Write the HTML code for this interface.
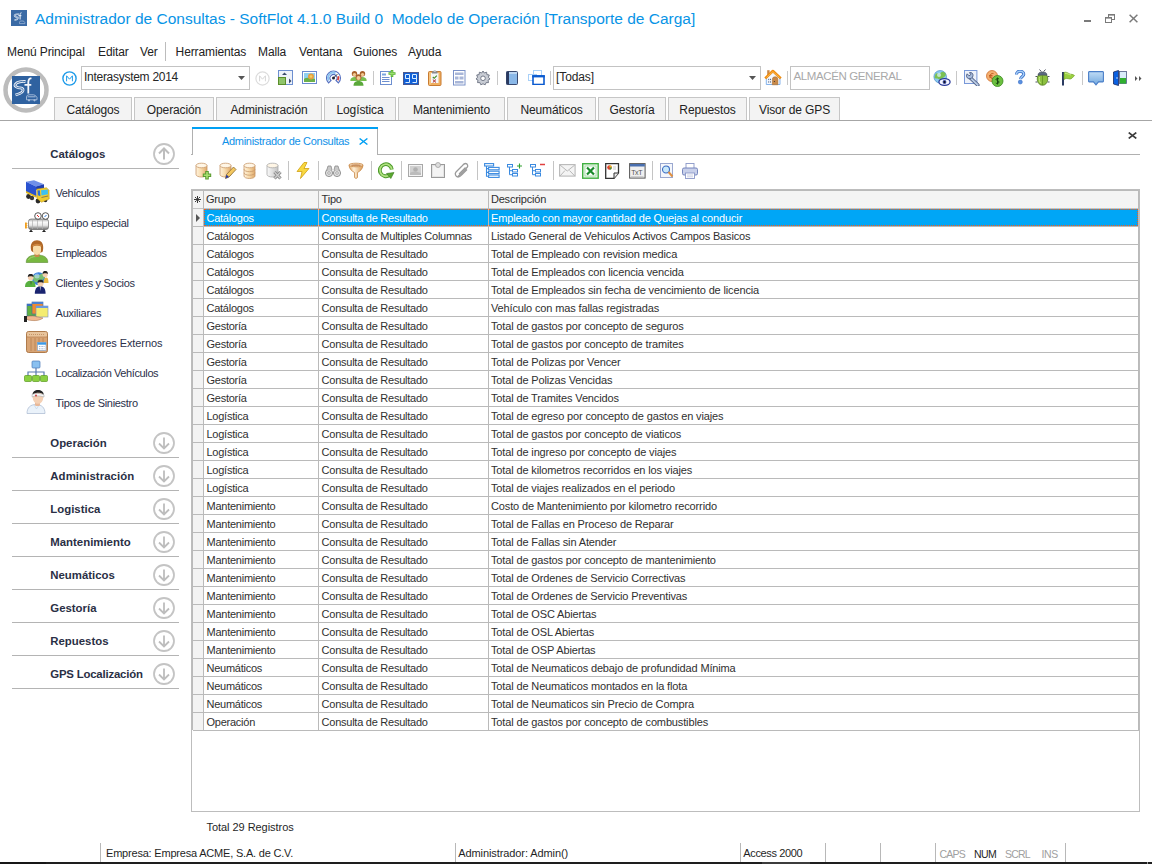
<!DOCTYPE html><html><head><meta charset="utf-8"><style>
html,body{margin:0;padding:0;}
body{width:1152px;height:864px;position:relative;overflow:hidden;background:#fff;font-family:"Liberation Sans",sans-serif;}
.t{position:absolute;white-space:pre;}
.b{position:absolute;display:block;}
</style></head><body>
<svg class="b" style="left:11px;top:10px" width="16" height="16" viewBox="0 0 16 16"><rect width="16" height="16" fill="#3a6aa5"/><path d="M8 4.3C6.5 4 4.3 4.5 3.7 5.3S4 6.7 5 6.9 7.3 7.2 7 8.3 5.5 9.8 3.5 10.3" fill="none" stroke="#e6edf6" stroke-width="1.5"/><path d="M8 4.3C6.5 4 4.3 4.5 3.7 5.3S4 6.7 5 6.9 7.3 7.2 7 8.3 5.5 9.8 3.5 10.3" fill="none" stroke="#3a6aa5" stroke-width="0.5"/><path d="M10.5 2.8C9.6 2.6 9.2 3.3 9.1 4.3V9.5M7.3 5.7H10.4" fill="none" stroke="#f0f4fa" stroke-width="1"/><path d="M8.5 12.3Q8.7 11 9.8 11H12Q13 11 13.8 12.4V13.6H8.5Z" fill="none" stroke="#a9bfdc" stroke-width="0.7"/></svg>
<div class="t" style="left:35px;top:11.48px;font-size:15.5px;line-height:15.5px;color:#0894e6;font-weight:400;letter-spacing:0px;">Administrador de Consultas - SoftFlot 4.1.0 Build 0  Modelo de Operación [Transporte de Carga]</div>
<div class="b" style="left:1084px;top:20px;width:7px;height:2px;background:#7a7a7a"></div>
<svg class="b" style="left:1105px;top:14px" width="10" height="9" viewBox="0 0 10 9"><rect x="3.5" y="0.5" width="6" height="5" fill="#fff" stroke="#7a7a7a"/><rect x="3" y="0" width="7" height="1.6" fill="#7a7a7a"/><rect x="0.5" y="3.5" width="6" height="5" fill="#fff" stroke="#7a7a7a"/><rect x="0" y="3" width="7" height="1.6" fill="#7a7a7a"/></svg>
<svg class="b" style="left:1129px;top:14px" width="9" height="9" viewBox="0 0 9 9"><path d="M0.6 0.8L8.4 8.2M8.4 0.8L0.6 8.2" stroke="#7a7a7a" stroke-width="1.5"/></svg>
<div class="t" style="left:7px;top:45.84px;font-size:12px;line-height:12px;color:#222;font-weight:400;letter-spacing:-0.12px;">Menú Principal</div>
<div class="t" style="left:98px;top:45.84px;font-size:12px;line-height:12px;color:#222;font-weight:400;letter-spacing:-0.12px;">Editar</div>
<div class="t" style="left:140px;top:45.84px;font-size:12px;line-height:12px;color:#222;font-weight:400;letter-spacing:-0.12px;">Ver</div>
<div class="t" style="left:175.6px;top:45.84px;font-size:12px;line-height:12px;color:#222;font-weight:400;letter-spacing:-0.12px;">Herramientas</div>
<div class="t" style="left:258px;top:45.84px;font-size:12px;line-height:12px;color:#222;font-weight:400;letter-spacing:-0.12px;">Malla</div>
<div class="t" style="left:299px;top:45.84px;font-size:12px;line-height:12px;color:#222;font-weight:400;letter-spacing:-0.12px;">Ventana</div>
<div class="t" style="left:353.3px;top:45.84px;font-size:12px;line-height:12px;color:#222;font-weight:400;letter-spacing:-0.12px;">Guiones</div>
<div class="t" style="left:408px;top:45.84px;font-size:12px;line-height:12px;color:#222;font-weight:400;letter-spacing:-0.12px;">Ayuda</div>
<div class="b" style="left:165px;top:42px;width:1px;height:19px;background:#bcbcbc"></div>
<svg class="b" style="left:2px;top:66px" width="48" height="48" viewBox="0 0 48 48"><circle cx="24" cy="24" r="20.5" fill="#fff" stroke="#bcbcbc" stroke-width="4.5"/><rect x="10" y="10" width="28" height="28" fill="#2f62a0"/><path d="M23.5 15.5C20 15 15 16 13.5 18S14.5 21.5 17 21.8 21.5 22 21 24.5 18 27.5 13.5 29" fill="none" stroke="#eef2f8" stroke-width="2.8" stroke-linejoin="round"/><path d="M23.5 15.5C20 15 15 16 13.5 18S14.5 21.5 17 21.8 21.5 22 21 24.5 18 27.5 13.5 29" fill="none" stroke="#2f62a0" stroke-width="0.9"/><path d="M29.5 12.5C27.5 12 26.5 13.5 26.3 16V27.5M22.5 18.8H29.3" fill="none" stroke="#f4f6fa" stroke-width="1.8"/><path d="M24.5 30.5Q25 28.8 27 28.8H31.5Q33.5 28.8 35 31.5V33.8H24.5Z" fill="none" stroke="#a9bfdc" stroke-width="0.9"/><path d="M25.5 30.8H33.5" stroke="#a9bfdc" stroke-width="1"/><circle cx="27" cy="34.3" r="1.1" fill="#a9bfdc"/><circle cx="32.5" cy="34.3" r="1.1" fill="#a9bfdc"/></svg>
<svg class="b" style="left:62px;top:71px" width="15" height="15" viewBox="0 0 15 15"><circle cx="7.5" cy="7.5" r="6.6" fill="#fff" stroke="#1e9be9" stroke-width="1.4"/><path d="M4.6 10.3V4.8L7.5 8.2 10.4 4.8V10.3" fill="none" stroke="#1e9be9" stroke-width="1"/></svg>
<div class="b" style="left:81px;top:66px;width:167px;height:22px;border:1px solid #c3c3c3;background:#fff"></div>
<div class="t" style="left:84px;top:70.64px;font-size:12px;line-height:12px;color:#262626;font-weight:400;letter-spacing:-0.28px;">Interasystem 2014</div>
<svg class="b" style="left:238px;top:76px" width="7" height="4" viewBox="0 0 7 4"><path d="M0 0H7L3.5 4Z" fill="#555"/></svg>
<svg class="b" style="left:255px;top:71px" width="15" height="15" viewBox="0 0 15 15"><circle cx="7.5" cy="7.5" r="6.6" fill="#fff" stroke="#dcdcdc" stroke-width="1.2"/><path d="M4.6 10.3V4.8L7.5 8.2 10.4 4.8V10.3" fill="none" stroke="#d6d6d6" stroke-width="1"/></svg>
<svg class="b" style="left:278px;top:70px" width="16" height="16" viewBox="0 0 16 16"><rect x="0.5" y="0.5" width="14" height="14" fill="#eef2f9" stroke="#6d8fd0"/><path d="M4 5L6.5 2.5 9 5Z" fill="#3a4a6a"/><path d="M11 8.5L13.5 11 11 13.5Z" fill="#3a4a6a"/><rect x="0.5" y="7.5" width="7" height="7" fill="#8fc46a" stroke="#5a8d2a"/></svg>
<svg class="b" style="left:302px;top:71px" width="16" height="14" viewBox="0 0 16 14"><rect x="0.5" y="0.5" width="14" height="12" fill="#fff" stroke="#6b8ad0"/><rect x="2" y="2" width="11" height="9" fill="#8fd0f0"/><path d="M2 8C5 6 9 7 13 8V11H2Z" fill="#6cb04a"/><circle cx="9" cy="5.5" r="3" fill="#e8a040"/><circle cx="9" cy="5.5" r="1.3" fill="#f4d060"/></svg>
<svg class="b" style="left:326px;top:70px" width="16" height="16" viewBox="0 0 16 16"><path d="M2.55 12.95A7 7 0 1 1 12.45 12.95L10 10.5A3.5 3.5 0 1 0 5 10.5Z" fill="#fff" stroke="#5570c0" stroke-width="1.1"/><path d="M3 10.5A5 5 0 0 1 9.5 3.3" fill="none" stroke="#8cc4f0" stroke-width="2"/><path d="M12.3 6.3A5 5 0 0 1 11.8 10.2" fill="none" stroke="#e03a30" stroke-width="1.8"/><path d="M7.5 8L11.3 4.2" stroke="#333" stroke-width="1"/><circle cx="7.5" cy="8" r="1.5" fill="#223"/></svg>
<svg class="b" style="left:350px;top:70px" width="17" height="16" viewBox="0 0 17 16"><path d="M0.3 11C0.3 8 2.3 7 4.5 7S8.7 8 8.7 11Z" fill="#78c050"/><path d="M8.3 11C8.3 8 10.3 7 12.5 7S16.7 8 16.7 11Z" fill="#78c050"/><circle cx="4.5" cy="3.8" r="2.7" fill="#a8602a"/><circle cx="4.5" cy="4.6" r="1.7" fill="#f0c890"/><circle cx="12.5" cy="3.8" r="2.7" fill="#a8602a"/><circle cx="12.5" cy="4.6" r="1.7" fill="#f0c890"/><path d="M3.5 15.8C3.5 12 6 11 8.5 11S13.5 12 13.5 15.8Z" fill="#5aa83a"/><circle cx="8.5" cy="7.2" r="3" fill="#a8602a"/><circle cx="8.5" cy="8.1" r="2" fill="#f4cc98"/></svg>
<div class="b" style="left:373px;top:71px;width:1px;height:14px;background:#c8c8c8"></div>
<svg class="b" style="left:380px;top:70px" width="17" height="16" viewBox="0 0 17 16"><rect x="0.5" y="1.5" width="11" height="13" fill="#fff" stroke="#6d8fd0"/><rect x="2" y="3.5" width="4" height="2" fill="#7aa6e0"/><path d="M2 7.5H9.5M2 9.5H9.5M2 11.5H9.5" stroke="#6d8fd0" stroke-width="1"/><path d="M12 0V7M8.5 3.5H15.5" stroke="#58b030" stroke-width="2.6"/><path d="M12 0.8V6.2M9.3 3.5H14.7" stroke="#9ae070" stroke-width="1"/></svg>
<svg class="b" style="left:403px;top:72px" width="16" height="13" viewBox="0 0 16 13"><rect x="0.5" y="0.5" width="15" height="12" fill="#1060d8" stroke="#4a5890" stroke-width="1"/><path d="M2.5 2.5H6.5V10.5H2.5M2.5 2.5V6.5H6.5M9.5 2.5H13.5V10.5H9.5M9.5 2.5V6.5H13.5" fill="none" stroke="#d8ecff" stroke-width="1"/></svg>
<svg class="b" style="left:428px;top:70px" width="14" height="16" viewBox="0 0 14 16"><rect x="0.5" y="1.5" width="12.5" height="14" rx="1" fill="#f0b060" stroke="#c87a30"/><rect x="1.5" y="2.5" width="1" height="12" fill="#fad8a0"/><rect x="3" y="3" width="7.5" height="10" fill="#f4f6fa"/><path d="M4 1.2H9.5V3.5H4Z" fill="#8a8a90"/><rect x="5.5" y="0" width="2.5" height="2" rx="1" fill="#c8c8cc"/><path d="M4.8 7L6.2 8.3 8.8 5.6" fill="none" stroke="#3a8a20" stroke-width="1.1"/><path d="M4.8 9.5L8 12.5M8 9.5L4.8 12.5" stroke="#b02828" stroke-width="1"/></svg>
<svg class="b" style="left:453px;top:70px" width="13" height="16" viewBox="0 0 13 16"><rect x="0.5" y="0.5" width="11.5" height="14.5" fill="#fff" stroke="#7b92c8"/><rect x="2" y="2.5" width="8.5" height="2.5" fill="#a8b6d8"/><rect x="2" y="6.5" width="3.5" height="3" fill="#a8b6d8"/><rect x="6.5" y="6.5" width="4" height="3" fill="#a8b6d8"/><rect x="2" y="11" width="8.5" height="2.5" fill="#a8b6d8"/></svg>
<svg class="b" style="left:475px;top:70px" width="16" height="16" viewBox="0 0 16 16"><path d="M8 1L9.3 3 11.6 2.2 11.9 4.6 14.3 5 13.4 7.2 15 9 13 10.2 13.5 12.6 11.1 12.6 10.2 14.8 8 13.8 5.8 14.8 4.9 12.6 2.5 12.6 3 10.2 1 9 2.6 7.2 1.7 5 4.1 4.6 4.4 2.2 6.7 3Z" fill="#c8ccd4" stroke="#6a7080" stroke-width="0.9"/><circle cx="8" cy="8.3" r="2.3" fill="#fff" stroke="#6a7080" stroke-width="0.9"/></svg>
<div class="b" style="left:497px;top:71px;width:1px;height:14px;background:#c8c8c8"></div>
<svg class="b" style="left:506px;top:71px" width="12" height="14" viewBox="0 0 12 14"><rect x="0.5" y="0.5" width="11" height="13" rx="1" fill="#8ab8e8" stroke="#3a4a70"/><rect x="0.5" y="0.5" width="2.5" height="13" fill="#2a3a60"/><rect x="3" y="1.5" width="8" height="1" fill="#f0f4fa"/></svg>
<svg class="b" style="left:528px;top:70px" width="17" height="15" viewBox="0 0 17 15"><rect x="5.5" y="0.5" width="8" height="6" fill="#fff" stroke="#a8d0f8"/><rect x="0.5" y="4.5" width="8" height="6" fill="#fff" stroke="#a8d0f8"/><rect x="5" y="6" width="11" height="8.5" fill="#fff" stroke="#0a5ad0" stroke-width="1.6"/><rect x="4.2" y="5.2" width="12.6" height="2.2" fill="#0a5ad0"/></svg>
<div class="b" style="left:550px;top:71px;width:1px;height:14px;background:#c8c8c8"></div>
<div class="b" style="left:553px;top:66px;width:206px;height:22px;border:1px solid #c3c3c3;background:#fff"></div>
<div class="t" style="left:556px;top:70.64px;font-size:12px;line-height:12px;color:#262626;font-weight:400;letter-spacing:-0.1px;">[Todas]</div>
<svg class="b" style="left:749px;top:76px" width="7" height="4" viewBox="0 0 7 4"><path d="M0 0H7L3.5 4Z" fill="#555"/></svg>
<svg class="b" style="left:764px;top:69px" width="18" height="17" viewBox="0 0 18 17"><rect x="3.2" y="1.2" width="2.4" height="5" fill="#c8884a"/><path d="M2.3 9V15.5H16V9L9 3Z" fill="#f4f8ff" stroke="#78acea" stroke-width="0.9"/><path d="M1.2 9.4L8.9 2 16.8 9.4" fill="none" stroke="#f08c10" stroke-width="2.6" stroke-linejoin="round"/><path d="M2.5 8.5L8.9 2.6 15.5 8.5" fill="none" stroke="#ffc860" stroke-width="0.8"/><path d="M8.3 15.8V10.5A2.8 2.8 0 0 1 13.9 10.5V15.8Z" fill="#c88848" stroke="#a06828" stroke-width="0.5"/><circle cx="10.4" cy="12.5" r="0.6" fill="#333"/><g fill="#5a6a80"><rect x="4.2" y="9.8" width="1" height="1.3"/><rect x="6" y="9.8" width="1" height="1.3"/><rect x="4.2" y="12.3" width="1" height="1.3"/><rect x="6" y="12.3" width="1" height="1.3"/></g></svg>
<div class="b" style="left:787px;top:71px;width:1px;height:14px;background:#c8c8c8"></div>
<div class="b" style="left:790px;top:66px;width:138px;height:22px;border:1px solid #c3c3c3;background:#fff"></div>
<div class="t" style="left:793.5px;top:71.07px;font-size:11.5px;line-height:11.5px;color:#a9a9a9;font-weight:400;letter-spacing:-0.38px;">ALMACÉN GENERAL</div>
<svg class="b" style="left:933px;top:70px" width="18" height="16" viewBox="0 0 18 16"><circle cx="7.2" cy="6.8" r="6.3" fill="#8ccaf0" stroke="#3a80c0" stroke-width="0.6"/><path d="M2.5 4C4 2 5.5 4.5 7 3.5S9 1 11.5 2.5 12.5 6.5 10.5 7.5 8 10.5 5.5 9 3 9.5 1.5 7.5Z" fill="#7ac040" opacity="0.9"/><circle cx="6" cy="5" r="2" fill="#e0f4ff" opacity="0.7"/><ellipse cx="11.5" cy="12" rx="5.6" ry="3.3" fill="#f4f6ff" stroke="#2a3a9a" stroke-width="1.3"/><circle cx="11.5" cy="12" r="1.9" fill="#3a4aa0"/><circle cx="11.5" cy="12" r="0.9" fill="#111"/></svg>
<div class="b" style="left:956px;top:71px;width:1px;height:14px;background:#c8c8c8"></div>
<svg class="b" style="left:964px;top:70px" width="16" height="16" viewBox="0 0 16 16"><rect x="0.5" y="0.5" width="12.4" height="13" fill="#eef2fa" stroke="#7898d8" stroke-width="1"/><path d="M6.5 8L13.8 15" stroke="#4a5a80" stroke-width="3.6" stroke-linecap="round"/><path d="M6.5 8L13.8 15" stroke="#b8cae4" stroke-width="1.8" stroke-linecap="round"/><path d="M3.2 3.8L5 5.8 6.8 4.6 5.5 2.6C7.5 2 9.2 3.5 9 5.6 8.8 8 6.5 9.3 4.5 8.6 2.5 8 1.8 5.5 3.2 3.8Z" fill="#a8bcdc" stroke="#4a5a80" stroke-width="0.9"/></svg>
<svg class="b" style="left:986px;top:70px" width="18" height="17" viewBox="0 0 18 17"><circle cx="6" cy="6" r="5.5" fill="#f4b070" stroke="#d07030" stroke-width="0.8"/><path d="M7.5 3.5C5.5 3 4 4.5 4 6S5.5 9 7.5 8.5M3 5.5H6.5M3 7H6.5" fill="none" stroke="#c05a20" stroke-width="0.9"/><circle cx="11.5" cy="11" r="5.5" fill="#6cc040" stroke="#3a8a20" stroke-width="0.8"/><path d="M13 9C12 8 10 8.5 10 9.5S13 10.5 13 12 11 14 9.8 13M11.5 7.5V14.5" fill="none" stroke="#1a4a10" stroke-width="1"/></svg>
<svg class="b" style="left:1014px;top:70px" width="12" height="15" viewBox="0 0 12 15"><path d="M2.5 4.5C2.5 2.3 4.2 1.2 6 1.2S9.8 2.3 9.8 4.3 6.8 6.6 6.5 9" fill="none" stroke="#3a70c8" stroke-width="3"/><path d="M2.5 4.5C2.5 2.3 4.2 1.2 6 1.2S9.8 2.3 9.8 4.3 6.8 6.6 6.5 9" fill="none" stroke="#a8d0f8" stroke-width="1.4"/><circle cx="6.3" cy="12" r="2" fill="#5a90e0" stroke="#3a70c8" stroke-width="0.6"/></svg>
<svg class="b" style="left:1035px;top:69px" width="15" height="17" viewBox="0 0 15 17"><path d="M4.5 0.5L6.3 2.5M10.5 0.5L8.7 2.5M0.5 7.5H2.5M12.5 7.5H14.5M0.5 13H2.5M12.5 13H14.5" stroke="#3a4050" stroke-width="0.9"/><ellipse cx="7.5" cy="10" rx="5.3" ry="6.3" fill="#8cc040" stroke="#4a7020" stroke-width="0.7"/><path d="M3 6.2A4.5 3.3 0 0 1 12 6.2Z" fill="#5a6a80" stroke="#3a4050" stroke-width="0.5"/><path d="M7.5 6.3V16" stroke="#5a8a20" stroke-width="0.7"/><path d="M4.5 8C4 10 4.5 13 5.5 14" fill="none" stroke="#c8f080" stroke-width="0.9"/></svg>
<svg class="b" style="left:1061px;top:71px" width="14" height="15" viewBox="0 0 14 15"><path d="M2 1V14.5" stroke="#2a3a60" stroke-width="2"/><path d="M3 1.5C5 0.5 7 2 8.5 2.8S12 3 13.5 4.5C12 6 10.5 8.5 8.5 8S5 7 3 8.5Z" fill="#9ad040" stroke="#6a9a20" stroke-width="0.6"/><path d="M4 2.5C6 2 8 3.5 10 4" fill="none" stroke="#d0f090" stroke-width="0.8"/></svg>
<div class="b" style="left:1082px;top:71px;width:1px;height:14px;background:#c8c8c8"></div>
<svg width="0" height="0" style="position:absolute"><defs><linearGradient id="chg" x1="0" x2="0" y1="0" y2="1"><stop offset="0" stop-color="#c0dcf6"/><stop offset="1" stop-color="#72a8de"/></linearGradient></defs></svg>
<svg class="b" style="left:1088px;top:71px" width="16" height="15" viewBox="0 0 16 15"><path d="M1.2 0.6H14.8A0.7 0.7 0 0 1 15.4 1.3V10.2A0.7 0.7 0 0 1 14.8 10.9H10.5L8 13.8 5.5 10.9H1.2A0.7 0.7 0 0 1 0.6 10.2V1.3A0.7 0.7 0 0 1 1.2 0.6Z" fill="url(#chg)" stroke="#4a7ec8" stroke-width="1.1"/></svg>
<svg class="b" style="left:1113px;top:70px" width="14" height="16" viewBox="0 0 14 16"><rect x="6.5" y="1.5" width="7" height="12" fill="#d8ecf8" stroke="#4a5a80" stroke-width="0.8"/><rect x="7" y="8" width="6" height="5.5" fill="#30b030"/><path d="M0.5 2L5.5 0.5V15.5L0.5 14Z" fill="#0a60e0" stroke="#1a2a60" stroke-width="0.8"/><circle cx="4" cy="8" r="0.7" fill="#fff"/></svg>
<svg class="b" style="left:1135px;top:76px" width="7" height="5" viewBox="0 0 7 5"><path d="M0 0L2.5 2.5 0 5ZM4 0L6.5 2.5 4 5Z" fill="#555"/></svg>
<div class="b" style="left:54px;top:97px;width:76px;height:23px;background:#f3f3f3;border:1px solid #c6c6c6;border-bottom:none;"></div>
<div class="t" style="left:54px;top:103.54px;width:78px;text-align:center;font-size:12px;line-height:12px;color:#222;letter-spacing:-0.12px;">Catálogos</div>
<div class="b" style="left:134px;top:97px;width:78px;height:23px;background:#f3f3f3;border:1px solid #c6c6c6;border-bottom:none;"></div>
<div class="t" style="left:134px;top:103.54px;width:80px;text-align:center;font-size:12px;line-height:12px;color:#222;letter-spacing:-0.12px;">Operación</div>
<div class="b" style="left:216px;top:97px;width:104px;height:23px;background:#f3f3f3;border:1px solid #c6c6c6;border-bottom:none;"></div>
<div class="t" style="left:216px;top:103.54px;width:106px;text-align:center;font-size:12px;line-height:12px;color:#222;letter-spacing:-0.12px;">Administración</div>
<div class="b" style="left:324px;top:97px;width:70px;height:23px;background:#f3f3f3;border:1px solid #c6c6c6;border-bottom:none;"></div>
<div class="t" style="left:324px;top:103.54px;width:72px;text-align:center;font-size:12px;line-height:12px;color:#222;letter-spacing:-0.12px;">Logística</div>
<div class="b" style="left:398px;top:97px;width:105px;height:23px;background:#f3f3f3;border:1px solid #c6c6c6;border-bottom:none;"></div>
<div class="t" style="left:398px;top:103.54px;width:107px;text-align:center;font-size:12px;line-height:12px;color:#222;letter-spacing:-0.12px;">Mantenimiento</div>
<div class="b" style="left:507px;top:97px;width:87px;height:23px;background:#f3f3f3;border:1px solid #c6c6c6;border-bottom:none;"></div>
<div class="t" style="left:507px;top:103.54px;width:89px;text-align:center;font-size:12px;line-height:12px;color:#222;letter-spacing:-0.12px;">Neumáticos</div>
<div class="b" style="left:598px;top:97px;width:66px;height:23px;background:#f3f3f3;border:1px solid #c6c6c6;border-bottom:none;"></div>
<div class="t" style="left:598px;top:103.54px;width:68px;text-align:center;font-size:12px;line-height:12px;color:#222;letter-spacing:-0.12px;">Gestoría</div>
<div class="b" style="left:668px;top:97px;width:77px;height:23px;background:#f3f3f3;border:1px solid #c6c6c6;border-bottom:none;"></div>
<div class="t" style="left:668px;top:103.54px;width:79px;text-align:center;font-size:12px;line-height:12px;color:#222;letter-spacing:-0.12px;">Repuestos</div>
<div class="b" style="left:749px;top:97px;width:89px;height:23px;background:#f3f3f3;border:1px solid #c6c6c6;border-bottom:none;"></div>
<div class="t" style="left:749px;top:103.54px;width:91px;text-align:center;font-size:12px;line-height:12px;color:#222;letter-spacing:-0.12px;">Visor de GPS</div>
<div class="b" style="left:0px;top:120px;width:1152px;height:1px;background:#a6a6a6"></div>
<div class="t" style="left:50.3px;top:149.05px;font-size:11.4px;line-height:11.4px;color:#2a2f45;font-weight:700;letter-spacing:0.0px;">Catálogos</div>
<svg class="b" style="left:153px;top:143px" width="22" height="22" viewBox="0 0 22 22"><circle cx="11" cy="11" r="10" fill="#fff" stroke="#c4c4c4" stroke-width="1.8"/><path d="M11 16.5V5.5M6 10.5L11 5.5 16 10.5" fill="none" stroke="#bdbdbd" stroke-width="2"/></svg>
<div class="b" style="left:12px;top:168px;width:167px;height:1px;background:#b4b4b4"></div>
<div class="t" style="left:55.5px;top:188.39px;font-size:11px;line-height:11px;color:#2a2f4a;font-weight:400;letter-spacing:-0.43px;">Vehículos</div>
<div class="t" style="left:55.5px;top:218.39px;font-size:11px;line-height:11px;color:#2a2f4a;font-weight:400;letter-spacing:-0.3px;">Equipo especial</div>
<div class="t" style="left:55.5px;top:248.39px;font-size:11px;line-height:11px;color:#2a2f4a;font-weight:400;letter-spacing:-0.45px;">Empleados</div>
<div class="t" style="left:55.5px;top:278.39px;font-size:11px;line-height:11px;color:#2a2f4a;font-weight:400;letter-spacing:-0.3px;">Clientes y Socios</div>
<div class="t" style="left:55.5px;top:308.39px;font-size:11px;line-height:11px;color:#2a2f4a;font-weight:400;letter-spacing:-0.2px;">Auxiliares</div>
<div class="t" style="left:55.5px;top:338.39px;font-size:11px;line-height:11px;color:#2a2f4a;font-weight:400;letter-spacing:-0.1px;">Proveedores Externos</div>
<div class="t" style="left:55.5px;top:368.39px;font-size:11px;line-height:11px;color:#2a2f4a;font-weight:400;letter-spacing:-0.39px;">Localización Vehículos</div>
<div class="t" style="left:55.5px;top:398.39px;font-size:11px;line-height:11px;color:#2a2f4a;font-weight:400;letter-spacing:-0.3px;">Tipos de Siniestro</div>
<svg class="b" style="left:24px;top:179px" width="26" height="26" viewBox="0 0 26 26"><circle cx="4.5" cy="17.5" r="2.4" fill="#2a2a2a"/><circle cx="8" cy="19" r="2.2" fill="#3a3a3a"/><circle cx="14" cy="22" r="2.4" fill="#2a2a2a"/><circle cx="21.5" cy="21.5" r="1.8" fill="#2a2a2a"/><path d="M2 2.8L10 1.2 20 5.2 12 7.5Z" fill="#7090e8"/><path d="M2 2.8L12 7.5 12.5 17.5 2 12.8Z" fill="#2a52d0"/><path d="M12 7.5L20 5.2 20 9 12.2 11Z" fill="#1e3eb0"/><path d="M2 12L12.5 17 12.5 18.8 2 14Z" fill="#e0b820"/><path d="M12.8 10L22.5 8.8 25 11.2 25.2 20 17.5 23.2 13 19.5Z" fill="#f0cc30" stroke="#b08a10" stroke-width="0.5"/><path d="M17 11.2L23.8 10.6 24 15.2 17.5 16.5Z" fill="#3ec0f0"/><path d="M13.6 11.5L15.8 11.3 16.4 17.3 14 16.2Z" fill="#2a70d8"/><path d="M17.5 18.5L24 17" stroke="#8a7a50" stroke-width="1"/></svg>
<svg width="0" height="0" style="position:absolute"><defs><linearGradient id="tk" x1="0" x2="0" y1="0" y2="1"><stop offset="0" stop-color="#a8a8a8"/><stop offset="0.3" stop-color="#fafafa"/><stop offset="0.6" stop-color="#e8e8e8"/><stop offset="1" stop-color="#707070"/></linearGradient></defs></svg>
<svg class="b" style="left:24px;top:211px" width="26" height="22" viewBox="0 0 26 22"><rect x="4.5" y="8" width="20" height="10.5" rx="2.5" fill="url(#tk)" stroke="#6a6a6a" stroke-width="0.7"/><path d="M8.5 8.5V18M13.5 8.5V18M18.5 8.5V18" stroke="#b0b0b0" stroke-width="0.7"/><circle cx="14" cy="5" r="3.3" fill="#fff" stroke="#444" stroke-width="0.9"/><circle cx="21.5" cy="5" r="3.3" fill="#fff" stroke="#444" stroke-width="0.9"/><path d="M13 4L15 6" stroke="#e02020" stroke-width="1"/><path d="M20.5 6L22.5 4" stroke="#2a7ae0" stroke-width="1"/><path d="M7 18.5L5 21H9ZM20 18.5L18 21H22Z" fill="#222"/><rect x="1" y="11.5" width="1.8" height="6" fill="#f0a020"/><path d="M1 12.5H3.5M1 14.5H3.5M1 16.5H3.5" stroke="#f0a020" stroke-width="0.6"/></svg>
<svg class="b" style="left:25px;top:239px" width="24" height="25" viewBox="0 0 24 25"><path d="M1.2 23.5C1.2 18 5.5 16 12 16S22.8 18 22.8 23.5Z" fill="#78b840" stroke="#5a8a30" stroke-width="0.6"/><path d="M3.5 21C4.5 18.5 7.5 17.5 12 17.5" fill="none" stroke="#a8d878" stroke-width="0.9"/><path d="M9.5 13.5H14.5V17.5Q12 18.5 9.5 17.5Z" fill="#c8884a"/><path d="M5.8 9C5.5 4 8 1.2 12 1.2S18.5 4 18.2 9 17 13 16 13.5 8 13.5 7 12.5 6 11 5.8 9Z" fill="#b06828"/><path d="M8 7.5Q12 5.5 16 7.5V12Q15.5 15.5 12 16 8.5 15.5 8 12Z" fill="#f8dca8"/><path d="M7.5 7Q12 4 16.5 7" fill="none" stroke="#d08840" stroke-width="1.3"/></svg>
<svg class="b" style="left:24px;top:270px" width="25" height="25" viewBox="0 0 25 25"><circle cx="14.6" cy="8.7" r="6.5" fill="#3a80d8"/><path d="M9 6C11 4 13 6 15 5S18 2.5 20 5 19.5 10 17 10 13 13.5 11 12 8.5 8 9 6Z" fill="#80c860" opacity="0.85"/><circle cx="13" cy="6" r="2.5" fill="#c0e0ff" opacity="0.6"/><path d="M19.5 13C19.5 9.5 20.5 7.5 22.2 7.5S24.5 9.5 24.5 13Z" fill="#e8b840"/><circle cx="21.2" cy="4.5" r="2.6" fill="#f4d0b0"/><path d="M18.5 4C18.5 1.5 20 1 21.2 1S24 1.5 24 4C23 3 19.5 3 18.5 4Z" fill="#222"/><path d="M1 17C1 12.5 3.5 10.8 6.7 10.8S11.5 12.5 11.5 17Z" fill="#58b040"/><path d="M6.5 11.5L7 15.5 7.5 11.5Z" fill="#333"/><circle cx="6.7" cy="7.4" r="2.8" fill="#f4d0b0"/><path d="M3.8 7C3.8 4.5 5.2 4 6.7 4S9.6 4.5 9.6 7C8.5 6 5 6 3.8 7Z" fill="#222"/><path d="M10.8 23.8C10.8 18.5 13 16.2 16.3 16.2S21.6 18.5 21.6 23.8Z" fill="#1a2470"/><path d="M15.8 16.8L16.3 21 16.8 16.8Z" fill="#ddd"/><circle cx="16.5" cy="13.4" r="3" fill="#f4d0b0"/><path d="M13.5 13C13.5 10.3 15 9.8 16.5 9.8S19.5 10.3 19.5 13C18.5 12 14.5 12 13.5 13Z" fill="#222"/></svg>
<svg class="b" style="left:24px;top:300px" width="25" height="23" viewBox="0 0 25 23"><rect x="3" y="4" width="10" height="12" fill="#60b040" stroke="#3a6aa0" stroke-width="0.6"/><rect x="3" y="4" width="10" height="2" fill="#3a70c0"/><rect x="8" y="2" width="11" height="12" fill="#f08a30" stroke="#3a6aa0" stroke-width="0.6"/><rect x="8" y="2" width="11" height="2" fill="#4a80d0"/><rect x="12" y="6" width="12" height="11" fill="#f4ec70" stroke="#7a90c0" stroke-width="0.6"/><rect x="12" y="6" width="12" height="2" fill="#6a9ae0"/><path d="M1 17L6 16C9 15.5 13 17 16 17.5L19 18C17 20 12 21 8 20.5L4 20Z" fill="#f0b890" stroke="#a06a40" stroke-width="0.5"/><rect x="0" y="16" width="3" height="6" fill="#222"/></svg>
<svg class="b" style="left:25px;top:330px" width="24" height="24" viewBox="0 0 24 24"><rect x="1.5" y="1.5" width="21" height="21" rx="2" fill="#d8a474" stroke="#a87040" stroke-width="0.9"/><rect x="2" y="2" width="20" height="5" rx="1.5" fill="#e8c49c"/><path d="M2 7H22" stroke="#b88050" stroke-width="0.7"/><path d="M6 8V21M10 8V21M14 8V21M18 8V21" stroke="#b88050" stroke-width="0.8"/><path d="M4 4.5H20" stroke="#b88050" stroke-width="0.7" stroke-dasharray="1 1"/><rect x="12.5" y="12.5" width="8.5" height="8" fill="#fff" stroke="#7aa0d0" stroke-width="0.6"/><rect x="12.5" y="12.5" width="8.5" height="2.2" fill="#3a9ae8"/><path d="M14 16.5H19.5M14 18.8H19.5" stroke="#7a9ac8" stroke-width="0.8" stroke-dasharray="1 0.6"/></svg>
<svg class="b" style="left:24px;top:360px" width="24" height="23" viewBox="0 0 24 23"><rect x="8" y="1" width="8" height="7" rx="1" fill="#8ac0f0" stroke="#4a7ab8" stroke-width="0.7"/><path d="M12 8V12M4 16V12H20V16M12 12V16" fill="none" stroke="#5a7ab0" stroke-width="1.2"/><rect x="0.5" y="15.5" width="7" height="6" rx="1" fill="#8ad040" stroke="#5a9a20" stroke-width="0.7"/><rect x="8.5" y="15.5" width="7" height="6" rx="1" fill="#8ad040" stroke="#5a9a20" stroke-width="0.7"/><rect x="16.5" y="15.5" width="7" height="6" rx="1" fill="#8ad040" stroke="#5a9a20" stroke-width="0.7"/></svg>
<svg class="b" style="left:26px;top:389px" width="20" height="25" viewBox="0 0 20 25"><path d="M1 24.5C1 18.5 4.5 15.5 10 15.5S19 18.5 19 24.5Z" fill="#eaf2fa" stroke="#a8b8d0" stroke-width="0.7"/><path d="M8 16L10.5 20 13 16" fill="none" stroke="#c0d0e0" stroke-width="0.6"/><path d="M9 12H14V16.5Q11.5 17.5 9 16.5Z" fill="#e8b898"/><ellipse cx="12" cy="8.5" rx="5.3" ry="6.3" fill="#f4d0b4"/><path d="M6.5 6C6.5 2.5 9 1 12 1S17.8 2.5 17.8 6L16 4.5C14 3.5 9 3.5 7 5.5Z" fill="#222"/><path d="M6 5.5C9 4 14 4 18 5.8V8C14 6.5 9 6.5 6.2 8Z" fill="#fafafa" stroke="#999" stroke-width="0.5"/><circle cx="10" cy="6.5" r="1" fill="#d04040"/></svg>
<div class="t" style="left:50.3px;top:438.15px;font-size:11.4px;line-height:11.4px;color:#2a2f45;font-weight:700;letter-spacing:0.0px;">Operación</div>
<svg class="b" style="left:153px;top:432px" width="22" height="22" viewBox="0 0 22 22"><circle cx="11" cy="11" r="10" fill="#fff" stroke="#c4c4c4" stroke-width="1.8"/><path d="M11 5.5V16.5M6 11.5L11 16.5 16 11.5" fill="none" stroke="#bdbdbd" stroke-width="1.8"/></svg>
<div class="b" style="left:12px;top:457px;width:167px;height:1px;background:#b4b4b4"></div>
<div class="t" style="left:50.3px;top:471.15px;font-size:11.4px;line-height:11.4px;color:#2a2f45;font-weight:700;letter-spacing:0.08px;">Administración</div>
<svg class="b" style="left:153px;top:465px" width="22" height="22" viewBox="0 0 22 22"><circle cx="11" cy="11" r="10" fill="#fff" stroke="#c4c4c4" stroke-width="1.8"/><path d="M11 5.5V16.5M6 11.5L11 16.5 16 11.5" fill="none" stroke="#bdbdbd" stroke-width="1.8"/></svg>
<div class="b" style="left:12px;top:490px;width:167px;height:1px;background:#b4b4b4"></div>
<div class="t" style="left:50.3px;top:504.15px;font-size:11.4px;line-height:11.4px;color:#2a2f45;font-weight:700;letter-spacing:0.0px;">Logistica</div>
<svg class="b" style="left:153px;top:498px" width="22" height="22" viewBox="0 0 22 22"><circle cx="11" cy="11" r="10" fill="#fff" stroke="#c4c4c4" stroke-width="1.8"/><path d="M11 5.5V16.5M6 11.5L11 16.5 16 11.5" fill="none" stroke="#bdbdbd" stroke-width="1.8"/></svg>
<div class="b" style="left:12px;top:523px;width:167px;height:1px;background:#b4b4b4"></div>
<div class="t" style="left:50.3px;top:537.15px;font-size:11.4px;line-height:11.4px;color:#2a2f45;font-weight:700;letter-spacing:0.0px;">Mantenimiento</div>
<svg class="b" style="left:153px;top:531px" width="22" height="22" viewBox="0 0 22 22"><circle cx="11" cy="11" r="10" fill="#fff" stroke="#c4c4c4" stroke-width="1.8"/><path d="M11 5.5V16.5M6 11.5L11 16.5 16 11.5" fill="none" stroke="#bdbdbd" stroke-width="1.8"/></svg>
<div class="b" style="left:12px;top:556px;width:167px;height:1px;background:#b4b4b4"></div>
<div class="t" style="left:50.3px;top:570.15px;font-size:11.4px;line-height:11.4px;color:#2a2f45;font-weight:700;letter-spacing:0.0px;">Neumáticos</div>
<svg class="b" style="left:153px;top:564px" width="22" height="22" viewBox="0 0 22 22"><circle cx="11" cy="11" r="10" fill="#fff" stroke="#c4c4c4" stroke-width="1.8"/><path d="M11 5.5V16.5M6 11.5L11 16.5 16 11.5" fill="none" stroke="#bdbdbd" stroke-width="1.8"/></svg>
<div class="b" style="left:12px;top:589px;width:167px;height:1px;background:#b4b4b4"></div>
<div class="t" style="left:50.3px;top:603.15px;font-size:11.4px;line-height:11.4px;color:#2a2f45;font-weight:700;letter-spacing:0.0px;">Gestoría</div>
<svg class="b" style="left:153px;top:597px" width="22" height="22" viewBox="0 0 22 22"><circle cx="11" cy="11" r="10" fill="#fff" stroke="#c4c4c4" stroke-width="1.8"/><path d="M11 5.5V16.5M6 11.5L11 16.5 16 11.5" fill="none" stroke="#bdbdbd" stroke-width="1.8"/></svg>
<div class="b" style="left:12px;top:622px;width:167px;height:1px;background:#b4b4b4"></div>
<div class="t" style="left:50.3px;top:636.15px;font-size:11.4px;line-height:11.4px;color:#2a2f45;font-weight:700;letter-spacing:0.0px;">Repuestos</div>
<svg class="b" style="left:153px;top:630px" width="22" height="22" viewBox="0 0 22 22"><circle cx="11" cy="11" r="10" fill="#fff" stroke="#c4c4c4" stroke-width="1.8"/><path d="M11 5.5V16.5M6 11.5L11 16.5 16 11.5" fill="none" stroke="#bdbdbd" stroke-width="1.8"/></svg>
<div class="b" style="left:12px;top:655px;width:167px;height:1px;background:#b4b4b4"></div>
<div class="t" style="left:50.3px;top:669.15px;font-size:11.4px;line-height:11.4px;color:#2a2f45;font-weight:700;letter-spacing:-0.2px;">GPS Localización</div>
<svg class="b" style="left:153px;top:663px" width="22" height="22" viewBox="0 0 22 22"><circle cx="11" cy="11" r="10" fill="#fff" stroke="#c4c4c4" stroke-width="1.8"/><path d="M11 5.5V16.5M6 11.5L11 16.5 16 11.5" fill="none" stroke="#bdbdbd" stroke-width="1.8"/></svg>
<div class="b" style="left:12px;top:688px;width:167px;height:1px;background:#b4b4b4"></div>
<div class="b" style="left:192px;top:127px;width:184px;height:28px;border-left:1px solid #b0b0b0;border-right:1px solid #b0b0b0;background:#fff;"></div>
<div class="b" style="left:192px;top:127px;width:186px;height:2px;background:#00a0f4"></div>
<div class="b" style="left:191px;top:154px;width:2px;height:1px;background:#b0b0b0"></div>
<div class="b" style="left:377px;top:154px;width:763px;height:1px;background:#b0b0b0"></div>
<div class="t" style="left:222px;top:136.39px;font-size:11px;line-height:11px;color:#0e90e8;font-weight:400;letter-spacing:-0.3px;">Administrador de Consultas</div>
<svg class="b" style="left:359px;top:138px" width="9" height="7" viewBox="0 0 9 7"><path d="M0.6 0.5L8.4 6.5M8.4 0.5L0.6 6.5" stroke="#00a0f4" stroke-width="1.4"/></svg>
<svg class="b" style="left:1128px;top:132px" width="9" height="7" viewBox="0 0 9 7"><path d="M0.7 0.5L8.3 6.5M8.3 0.5L0.7 6.5" stroke="#3c3c3c" stroke-width="1.6"/></svg>
<svg width="0" height="0" style="position:absolute"><defs><linearGradient id="cg" x1="0" x2="1" y1="0" y2="0"><stop offset="0" stop-color="#fff2dc"/><stop offset="0.45" stop-color="#f8dcae"/><stop offset="1" stop-color="#e0a868"/></linearGradient><linearGradient id="gg" x1="0" x2="1" y1="0" y2="0"><stop offset="0" stop-color="#fafafa"/><stop offset="1" stop-color="#c4c4c4"/></linearGradient></defs></svg>
<svg class="b" style="left:195px;top:162px" width="18" height="18" viewBox="0 0 18 18"><path d="M1 3.5V12.5C1 14 3.5 15 6.5 15S12 14 12 12.5V3.5" fill="url(#cg)" stroke="#c8986a" stroke-width="0.8"/><ellipse cx="6.5" cy="3.5" rx="5.5" ry="2.3" fill="#fff6e6" stroke="#c8986a" stroke-width="0.8"/><path d="M12 9V17.5M7.8 13.2H16.2" stroke="#5a9a30" stroke-width="3.6"/><path d="M12 10V16.5M8.8 13.2H15.2" stroke="#a8e070" stroke-width="1.6"/></svg>
<svg class="b" style="left:219px;top:162px" width="18" height="18" viewBox="0 0 18 18"><path d="M1 3.5V12.5C1 14 3.5 15 6.5 15S12 14 12 12.5V3.5" fill="url(#cg)" stroke="#c8986a" stroke-width="0.8"/><ellipse cx="6.5" cy="3.5" rx="5.5" ry="2.3" fill="#fff6e6" stroke="#c8986a" stroke-width="0.8"/><path d="M6.5 16.5L7.5 12.5 14.5 5 17 7.5 10 15Z" fill="#f4c860" stroke="#8a6a30" stroke-width="0.8"/><path d="M6.5 16.5L7.5 12.5 10 15Z" fill="#2a3aa0"/></svg>
<svg class="b" style="left:243px;top:162px" width="14" height="18" viewBox="0 0 14 18"><path d="M1 3.5V14C1 15.5 3.5 16.5 6.5 16.5S12 15.5 12 14V3.5" fill="url(#cg)" stroke="#c8986a" stroke-width="0.8"/><path d="M1 7.2C1 8.7 3.5 9.7 6.5 9.7S12 8.7 12 7.2M1 10.7C1 12.2 3.5 13.2 6.5 13.2S12 12.2 12 10.7" fill="none" stroke="#c8986a" stroke-width="0.8"/><ellipse cx="6.5" cy="3.5" rx="5.5" ry="2.3" fill="#fff6e6" stroke="#c8986a" stroke-width="0.8"/></svg>
<svg class="b" style="left:266px;top:162px" width="16" height="18" viewBox="0 0 16 18"><path d="M1 3.5V12.5C1 14 3.5 15 6.5 15S12 14 12 12.5V3.5" fill="url(#gg)" stroke="#a8a8a8" stroke-width="0.8"/><ellipse cx="6.5" cy="3.5" rx="5.5" ry="2.3" fill="#fff6e6" stroke="#a8a8a8" stroke-width="0.8"/><path d="M8.5 10L14.5 16.5M14.5 10L8.5 16.5" stroke="#8a8a8a" stroke-width="3.2"/><path d="M8.5 10L14.5 16.5M14.5 10L8.5 16.5" stroke="#cfcfcf" stroke-width="1.2"/></svg>
<div class="b" style="left:288px;top:161px;width:1px;height:19px;background:#c4c4c4"></div>
<svg class="b" style="left:296px;top:162px" width="14" height="17" viewBox="0 0 14 17"><path d="M8 0.5L1 9.5H6L4.5 16.5 13 6.5H8L11 0.5Z" fill="#f8d840" stroke="#d0a010" stroke-width="0.8"/></svg>
<div class="b" style="left:318px;top:161px;width:1px;height:19px;background:#c4c4c4"></div>
<svg class="b" style="left:325px;top:165px" width="16" height="12" viewBox="0 0 16 12"><ellipse cx="4" cy="8" rx="3.6" ry="3.6" fill="#e0e0e0" stroke="#8a8a8a" stroke-width="0.9"/><ellipse cx="12" cy="8" rx="3.6" ry="3.6" fill="#e0e0e0" stroke="#8a8a8a" stroke-width="0.9"/><path d="M1.5 6L3 1H6L7 5M14.5 6L13 1H10L9 5" fill="#c8c8c8" stroke="#8a8a8a" stroke-width="0.8"/><circle cx="4" cy="8" r="1.3" fill="#fff" stroke="#777" stroke-width="0.6"/><circle cx="12" cy="8" r="1.3" fill="#fff" stroke="#777" stroke-width="0.6"/></svg>
<svg width="0" height="0" style="position:absolute"><defs><linearGradient id="fg" x1="0" x2="1" y1="0" y2="0"><stop offset="0" stop-color="#e0a868"/><stop offset="0.35" stop-color="#fff0d8"/><stop offset="1" stop-color="#d89850"/></linearGradient></defs></svg>
<svg class="b" style="left:348px;top:162px" width="16" height="17" viewBox="0 0 16 17"><path d="M1 3C1 7 4.5 9.5 6.5 10.5V15.5C6.5 16.5 9.5 16.5 9.5 15.5V10.5C11.5 9.5 15 7 15 3Z" fill="url(#fg)" stroke="#c88848" stroke-width="0.8"/><ellipse cx="8" cy="3" rx="7" ry="1.8" fill="#f8e0c0" stroke="#c88848" stroke-width="0.8"/><ellipse cx="8" cy="3.2" rx="5" ry="1" fill="#c89060"/></svg>
<div class="b" style="left:371px;top:161px;width:1px;height:19px;background:#c4c4c4"></div>
<svg class="b" style="left:378px;top:162px" width="17" height="17" viewBox="0 0 17 17"><path d="M13.8 7.5A6 6 0 1 0 11.5 13" fill="none" stroke="#4a9a28" stroke-width="3.8"/><path d="M13.8 7.5A6 6 0 1 0 11.5 13" fill="none" stroke="#b0e080" stroke-width="1.8"/><path d="M8.5 11.5L16 10.5 12.8 16.5Z" fill="#5aa830" stroke="#3a7a20" stroke-width="0.6"/></svg>
<div class="b" style="left:401px;top:161px;width:1px;height:19px;background:#c4c4c4"></div>
<svg class="b" style="left:408px;top:164px" width="15" height="13" viewBox="0 0 15 13"><rect x="0.5" y="0.5" width="14" height="12" fill="#f4f4f4" stroke="#a8a8a8"/><rect x="2" y="2" width="11" height="9" fill="#d0d0d0"/><circle cx="7.5" cy="5.5" r="2.3" fill="#b0b0b0"/><path d="M2 9C5 7 9 8 13 9V11H2Z" fill="#bcbcbc"/></svg>
<svg class="b" style="left:431px;top:162px" width="15" height="16" viewBox="0 0 15 16"><rect x="0.5" y="2.5" width="13" height="13" fill="#e4e4e4" stroke="#9a9a9a"/><rect x="2" y="4" width="10" height="10" fill="#f4f4f4"/><circle cx="7" cy="3" r="2.5" fill="#ddd" stroke="#999" stroke-width="0.7"/></svg>
<svg class="b" style="left:454px;top:162px" width="16" height="16" viewBox="0 0 16 16"><path d="M4 14.5L13 5.5C14.5 4 13.5 1.5 11.5 1.5S9 3 7.5 4.5L2 10C0.5 11.5 1.5 15 4 15S7 13.5 8 12.5L13 7.5" fill="none" stroke="#9a9a9a" stroke-width="1.3"/><path d="M5 12L11.5 5.5" stroke="#9a9a9a" stroke-width="1.1"/></svg>
<div class="b" style="left:477px;top:161px;width:1px;height:19px;background:#c4c4c4"></div>
<svg class="b" style="left:484px;top:163px" width="16" height="15" viewBox="0 0 16 15"><g fill="#fff" stroke="#3a8ae0" stroke-width="1.1"><rect x="0.6" y="0.6" width="9" height="2.4"/><rect x="4.6" y="4.4" width="10.5" height="2.4"/><rect x="4.6" y="8.2" width="10.5" height="2.4"/><rect x="4.6" y="12" width="10.5" height="2.4"/></g><path d="M2.5 3V13.2H4.6M2.5 5.6H4.6M2.5 9.4H4.6" fill="none" stroke="#3a8ae0" stroke-width="1.1"/></svg>
<svg class="b" style="left:507px;top:163px" width="16" height="15" viewBox="0 0 16 15"><g fill="#fff" stroke="#3a8ae0" stroke-width="1"><rect x="0.5" y="1.5" width="5" height="2.5"/><rect x="5.5" y="6.5" width="5" height="2.5"/><rect x="5.5" y="10.5" width="5" height="2.5"/></g><path d="M2.5 4V11.7H5.5M2.5 7.7H5.5" fill="none" stroke="#3a8ae0" stroke-width="1"/><path d="M12.5 0.5V5.5M10 3H15" stroke="#30a030" stroke-width="1.1"/></svg>
<svg class="b" style="left:530px;top:163px" width="16" height="15" viewBox="0 0 16 15"><g fill="#fff" stroke="#3a8ae0" stroke-width="1"><rect x="0.5" y="1.5" width="5" height="2.5"/><rect x="5.5" y="6.5" width="5" height="2.5"/><rect x="5.5" y="10.5" width="5" height="2.5"/></g><path d="M2.5 4V11.7H5.5M2.5 7.7H5.5" fill="none" stroke="#3a8ae0" stroke-width="1"/><path d="M10 1.5H15" stroke="#e04040" stroke-width="1.5"/></svg>
<div class="b" style="left:553px;top:161px;width:1px;height:19px;background:#c4c4c4"></div>
<svg class="b" style="left:559px;top:164px" width="17" height="13" viewBox="0 0 17 13"><rect x="0.6" y="0.6" width="15.5" height="11.5" fill="#f4f4f4" stroke="#b8b8b8" stroke-width="1.1"/><path d="M1 1L8.3 7 15.8 1M1 12L6 6.5M15.8 12L10.5 6.5" fill="none" stroke="#b8b8b8" stroke-width="1"/></svg>
<svg class="b" style="left:582px;top:163px" width="17" height="16" viewBox="0 0 17 16"><rect x="0.7" y="0.7" width="15.5" height="14.5" fill="#e8f8e8" stroke="#40b040" stroke-width="1.4"/><rect x="3" y="3" width="11" height="10" fill="#fff" stroke="#80c880" stroke-width="0.6"/><path d="M5 4.5L12 11.5M12 4.5L5 11.5" stroke="#1a8a2a" stroke-width="2.2"/></svg>
<svg class="b" style="left:605px;top:163px" width="15" height="16" viewBox="0 0 15 16"><path d="M0.7 0.7H13.5V10L9 15.3H0.7Z" fill="#fff" stroke="#333" stroke-width="1.3"/><path d="M13.5 10H9V15.3" fill="#e8e8e8" stroke="#333" stroke-width="1"/><circle cx="4.5" cy="4.5" r="2.3" fill="#e04030"/><path d="M4.5 4.5V2.2A2.3 2.3 0 0 1 6.8 4.5Z" fill="#f0c020"/><path d="M4.5 4.5H6.8A2.3 2.3 0 0 1 5 6.8Z" fill="#40a040"/><path d="M8 4H11M8 6H11" stroke="#bbb" stroke-width="0.8"/></svg>
<svg class="b" style="left:629px;top:163px" width="17" height="16" viewBox="0 0 17 16"><rect x="0.6" y="0.6" width="15.5" height="14.5" fill="#f0f0f0" stroke="#555" stroke-width="1"/><rect x="1" y="1" width="14.8" height="2.5" fill="#4a70b0"/><text x="2.2" y="11.8" font-family="Liberation Sans" font-size="7" fill="#555" letter-spacing="-0.4">TxT</text><path d="M2 13.5H14.5" stroke="#c8c8c8" stroke-width="0.8"/></svg>
<div class="b" style="left:652px;top:161px;width:1px;height:19px;background:#c4c4c4"></div>
<svg class="b" style="left:660px;top:163px" width="15" height="16" viewBox="0 0 15 16"><rect x="0.5" y="0.5" width="12" height="14" fill="#f4f6fb" stroke="#9aa8d0"/><circle cx="6" cy="6.5" r="3.5" fill="#c8e8fa" stroke="#3a6ac0" stroke-width="1.1"/><path d="M8.5 9L12.5 13.5" stroke="#e09040" stroke-width="2"/></svg>
<svg class="b" style="left:682px;top:163px" width="16" height="16" viewBox="0 0 16 16"><rect x="4" y="0.5" width="8" height="5" fill="#fff" stroke="#8a98c8" stroke-width="0.9"/><rect x="0.5" y="5" width="15" height="7" rx="1.5" fill="#c8d0ea" stroke="#6a7ab8" stroke-width="0.9"/><rect x="3.5" y="10" width="9" height="5.5" fill="#fff" stroke="#8a98c8" stroke-width="0.9"/><path d="M5 12H11M5 13.8H11" stroke="#a8b0d0" stroke-width="0.6"/></svg>
<div class="b" style="left:191px;top:189px;width:947px;height:621px;border:1px solid #bdbdbd;background:#fff;"></div>
<div class="b" style="left:192px;top:190px;width:947px;height:1px;background:#bababa"></div>
<div class="b" style="left:192px;top:190px;width:1px;height:540px;background:#bababa"></div>
<div class="b" style="left:193px;top:191px;width:945px;height:17px;background:#f4f4f4"></div>
<div class="b" style="left:193px;top:208px;width:945px;height:1px;background:#c4c4c4"></div>
<div class="b" style="left:193px;top:209px;width:10px;height:522px;background:#f3f3f3"></div>
<div class="b" style="left:193px;top:226px;width:945px;height:1px;background:#bababa"></div>
<div class="b" style="left:193px;top:244px;width:945px;height:1px;background:#bababa"></div>
<div class="b" style="left:193px;top:262px;width:945px;height:1px;background:#bababa"></div>
<div class="b" style="left:193px;top:280px;width:945px;height:1px;background:#bababa"></div>
<div class="b" style="left:193px;top:298px;width:945px;height:1px;background:#bababa"></div>
<div class="b" style="left:193px;top:316px;width:945px;height:1px;background:#bababa"></div>
<div class="b" style="left:193px;top:334px;width:945px;height:1px;background:#bababa"></div>
<div class="b" style="left:193px;top:352px;width:945px;height:1px;background:#bababa"></div>
<div class="b" style="left:193px;top:370px;width:945px;height:1px;background:#bababa"></div>
<div class="b" style="left:193px;top:388px;width:945px;height:1px;background:#bababa"></div>
<div class="b" style="left:193px;top:406px;width:945px;height:1px;background:#bababa"></div>
<div class="b" style="left:193px;top:424px;width:945px;height:1px;background:#bababa"></div>
<div class="b" style="left:193px;top:442px;width:945px;height:1px;background:#bababa"></div>
<div class="b" style="left:193px;top:460px;width:945px;height:1px;background:#bababa"></div>
<div class="b" style="left:193px;top:478px;width:945px;height:1px;background:#bababa"></div>
<div class="b" style="left:193px;top:496px;width:945px;height:1px;background:#bababa"></div>
<div class="b" style="left:193px;top:514px;width:945px;height:1px;background:#bababa"></div>
<div class="b" style="left:193px;top:532px;width:945px;height:1px;background:#bababa"></div>
<div class="b" style="left:193px;top:550px;width:945px;height:1px;background:#bababa"></div>
<div class="b" style="left:193px;top:568px;width:945px;height:1px;background:#bababa"></div>
<div class="b" style="left:193px;top:586px;width:945px;height:1px;background:#bababa"></div>
<div class="b" style="left:193px;top:604px;width:945px;height:1px;background:#bababa"></div>
<div class="b" style="left:193px;top:622px;width:945px;height:1px;background:#bababa"></div>
<div class="b" style="left:193px;top:640px;width:945px;height:1px;background:#bababa"></div>
<div class="b" style="left:193px;top:658px;width:945px;height:1px;background:#bababa"></div>
<div class="b" style="left:193px;top:676px;width:945px;height:1px;background:#bababa"></div>
<div class="b" style="left:193px;top:694px;width:945px;height:1px;background:#bababa"></div>
<div class="b" style="left:193px;top:712px;width:945px;height:1px;background:#bababa"></div>
<div class="b" style="left:193px;top:730px;width:945px;height:1px;background:#bababa"></div>
<div class="b" style="left:203px;top:191px;width:1px;height:540px;background:#bababa"></div>
<div class="b" style="left:318px;top:191px;width:1px;height:540px;background:#bababa"></div>
<div class="b" style="left:488px;top:191px;width:1px;height:540px;background:#bababa"></div>
<div class="b" style="left:1138px;top:191px;width:1px;height:540px;background:#bababa"></div>
<div class="b" style="left:204px;top:209px;width:932px;height:15px;background:#00a6f6;border:1px dotted #f25e1c;"></div>
<div class="b" style="left:318px;top:209px;width:1px;height:17px;background:#bababa"></div>
<div class="b" style="left:488px;top:209px;width:1px;height:17px;background:#bababa"></div>
<svg class="b" style="left:196px;top:214px" width="4" height="8" viewBox="0 0 4 8"><path d="M0 0L4 4 0 8Z" fill="#555"/></svg>
<svg class="b" style="left:194px;top:196px" width="7" height="7" viewBox="0 0 7 7"><g fill="#3a3a3a"><rect x="3" y="0" width="1" height="7"/><rect x="0" y="3" width="7" height="1"/><rect x="1" y="1" width="1" height="1"/><rect x="5" y="1" width="1" height="1"/><rect x="1" y="5" width="1" height="1"/><rect x="5" y="5" width="1" height="1"/></g><g fill="#777"><rect x="2" y="2" width="1" height="1"/><rect x="4" y="2" width="1" height="1"/><rect x="2" y="4" width="1" height="1"/><rect x="4" y="4" width="1" height="1"/></g></svg>
<div class="t" style="left:206px;top:194.39px;font-size:11px;line-height:11px;color:#303030;font-weight:400;letter-spacing:-0.22px;">Grupo</div>
<div class="t" style="left:321.6px;top:194.39px;font-size:11px;line-height:11px;color:#303030;font-weight:400;letter-spacing:-0.22px;">Tipo</div>
<div class="t" style="left:491px;top:194.39px;font-size:11px;line-height:11px;color:#303030;font-weight:400;letter-spacing:-0.22px;">Descripción</div>
<div class="t" style="left:206.5px;top:212.69px;font-size:11px;line-height:11px;color:#ffffff;font-weight:400;letter-spacing:-0.25px;">Catálogos</div>
<div class="t" style="left:321.6px;top:212.69px;font-size:11px;line-height:11px;color:#ffffff;font-weight:400;letter-spacing:-0.25px;">Consulta de Resultado</div>
<div class="t" style="left:491px;top:212.69px;font-size:11px;line-height:11px;color:#ffffff;font-weight:400;letter-spacing:-0.14px;">Empleado con mayor cantidad de Quejas al conducir</div>
<div class="t" style="left:206.5px;top:230.69px;font-size:11px;line-height:11px;color:#303030;font-weight:400;letter-spacing:-0.25px;">Catálogos</div>
<div class="t" style="left:321.6px;top:230.69px;font-size:11px;line-height:11px;color:#303030;font-weight:400;letter-spacing:-0.25px;">Consulta de Multiples Columnas</div>
<div class="t" style="left:491px;top:230.69px;font-size:11px;line-height:11px;color:#303030;font-weight:400;letter-spacing:-0.14px;">Listado General de Vehiculos Activos Campos Basicos</div>
<div class="t" style="left:206.5px;top:248.69px;font-size:11px;line-height:11px;color:#303030;font-weight:400;letter-spacing:-0.25px;">Catálogos</div>
<div class="t" style="left:321.6px;top:248.69px;font-size:11px;line-height:11px;color:#303030;font-weight:400;letter-spacing:-0.25px;">Consulta de Resultado</div>
<div class="t" style="left:491px;top:248.69px;font-size:11px;line-height:11px;color:#303030;font-weight:400;letter-spacing:-0.14px;">Total de Empleado con revision medica</div>
<div class="t" style="left:206.5px;top:266.69px;font-size:11px;line-height:11px;color:#303030;font-weight:400;letter-spacing:-0.25px;">Catálogos</div>
<div class="t" style="left:321.6px;top:266.69px;font-size:11px;line-height:11px;color:#303030;font-weight:400;letter-spacing:-0.25px;">Consulta de Resultado</div>
<div class="t" style="left:491px;top:266.69px;font-size:11px;line-height:11px;color:#303030;font-weight:400;letter-spacing:-0.14px;">Total de Empleados con licencia vencida</div>
<div class="t" style="left:206.5px;top:284.69px;font-size:11px;line-height:11px;color:#303030;font-weight:400;letter-spacing:-0.25px;">Catálogos</div>
<div class="t" style="left:321.6px;top:284.69px;font-size:11px;line-height:11px;color:#303030;font-weight:400;letter-spacing:-0.25px;">Consulta de Resultado</div>
<div class="t" style="left:491px;top:284.69px;font-size:11px;line-height:11px;color:#303030;font-weight:400;letter-spacing:-0.14px;">Total de Empleados sin fecha de vencimiento de licencia</div>
<div class="t" style="left:206.5px;top:302.69px;font-size:11px;line-height:11px;color:#303030;font-weight:400;letter-spacing:-0.25px;">Catálogos</div>
<div class="t" style="left:321.6px;top:302.69px;font-size:11px;line-height:11px;color:#303030;font-weight:400;letter-spacing:-0.25px;">Consulta de Resultado</div>
<div class="t" style="left:491px;top:302.69px;font-size:11px;line-height:11px;color:#303030;font-weight:400;letter-spacing:-0.14px;">Vehículo con mas fallas registradas</div>
<div class="t" style="left:206.5px;top:320.69px;font-size:11px;line-height:11px;color:#303030;font-weight:400;letter-spacing:-0.25px;">Gestoría</div>
<div class="t" style="left:321.6px;top:320.69px;font-size:11px;line-height:11px;color:#303030;font-weight:400;letter-spacing:-0.25px;">Consulta de Resultado</div>
<div class="t" style="left:491px;top:320.69px;font-size:11px;line-height:11px;color:#303030;font-weight:400;letter-spacing:-0.14px;">Total de gastos por concepto de seguros</div>
<div class="t" style="left:206.5px;top:338.69px;font-size:11px;line-height:11px;color:#303030;font-weight:400;letter-spacing:-0.25px;">Gestoría</div>
<div class="t" style="left:321.6px;top:338.69px;font-size:11px;line-height:11px;color:#303030;font-weight:400;letter-spacing:-0.25px;">Consulta de Resultado</div>
<div class="t" style="left:491px;top:338.69px;font-size:11px;line-height:11px;color:#303030;font-weight:400;letter-spacing:-0.14px;">Total de gastos por concepto de tramites</div>
<div class="t" style="left:206.5px;top:356.69px;font-size:11px;line-height:11px;color:#303030;font-weight:400;letter-spacing:-0.25px;">Gestoría</div>
<div class="t" style="left:321.6px;top:356.69px;font-size:11px;line-height:11px;color:#303030;font-weight:400;letter-spacing:-0.25px;">Consulta de Resultado</div>
<div class="t" style="left:491px;top:356.69px;font-size:11px;line-height:11px;color:#303030;font-weight:400;letter-spacing:-0.14px;">Total de Polizas por Vencer</div>
<div class="t" style="left:206.5px;top:374.69px;font-size:11px;line-height:11px;color:#303030;font-weight:400;letter-spacing:-0.25px;">Gestoría</div>
<div class="t" style="left:321.6px;top:374.69px;font-size:11px;line-height:11px;color:#303030;font-weight:400;letter-spacing:-0.25px;">Consulta de Resultado</div>
<div class="t" style="left:491px;top:374.69px;font-size:11px;line-height:11px;color:#303030;font-weight:400;letter-spacing:-0.14px;">Total de Polizas Vencidas</div>
<div class="t" style="left:206.5px;top:392.69px;font-size:11px;line-height:11px;color:#303030;font-weight:400;letter-spacing:-0.25px;">Gestoría</div>
<div class="t" style="left:321.6px;top:392.69px;font-size:11px;line-height:11px;color:#303030;font-weight:400;letter-spacing:-0.25px;">Consulta de Resultado</div>
<div class="t" style="left:491px;top:392.69px;font-size:11px;line-height:11px;color:#303030;font-weight:400;letter-spacing:-0.14px;">Total de Tramites Vencidos</div>
<div class="t" style="left:206.5px;top:410.69px;font-size:11px;line-height:11px;color:#303030;font-weight:400;letter-spacing:-0.25px;">Logística</div>
<div class="t" style="left:321.6px;top:410.69px;font-size:11px;line-height:11px;color:#303030;font-weight:400;letter-spacing:-0.25px;">Consulta de Resultado</div>
<div class="t" style="left:491px;top:410.69px;font-size:11px;line-height:11px;color:#303030;font-weight:400;letter-spacing:-0.14px;">Total de egreso por concepto de gastos en viajes</div>
<div class="t" style="left:206.5px;top:428.69px;font-size:11px;line-height:11px;color:#303030;font-weight:400;letter-spacing:-0.25px;">Logística</div>
<div class="t" style="left:321.6px;top:428.69px;font-size:11px;line-height:11px;color:#303030;font-weight:400;letter-spacing:-0.25px;">Consulta de Resultado</div>
<div class="t" style="left:491px;top:428.69px;font-size:11px;line-height:11px;color:#303030;font-weight:400;letter-spacing:-0.14px;">Total de gastos por concepto de viaticos</div>
<div class="t" style="left:206.5px;top:446.69px;font-size:11px;line-height:11px;color:#303030;font-weight:400;letter-spacing:-0.25px;">Logística</div>
<div class="t" style="left:321.6px;top:446.69px;font-size:11px;line-height:11px;color:#303030;font-weight:400;letter-spacing:-0.25px;">Consulta de Resultado</div>
<div class="t" style="left:491px;top:446.69px;font-size:11px;line-height:11px;color:#303030;font-weight:400;letter-spacing:-0.14px;">Total de ingreso por concepto de viajes</div>
<div class="t" style="left:206.5px;top:464.69px;font-size:11px;line-height:11px;color:#303030;font-weight:400;letter-spacing:-0.25px;">Logística</div>
<div class="t" style="left:321.6px;top:464.69px;font-size:11px;line-height:11px;color:#303030;font-weight:400;letter-spacing:-0.25px;">Consulta de Resultado</div>
<div class="t" style="left:491px;top:464.69px;font-size:11px;line-height:11px;color:#303030;font-weight:400;letter-spacing:-0.14px;">Total de kilometros recorridos en los viajes</div>
<div class="t" style="left:206.5px;top:482.69px;font-size:11px;line-height:11px;color:#303030;font-weight:400;letter-spacing:-0.25px;">Logística</div>
<div class="t" style="left:321.6px;top:482.69px;font-size:11px;line-height:11px;color:#303030;font-weight:400;letter-spacing:-0.25px;">Consulta de Resultado</div>
<div class="t" style="left:491px;top:482.69px;font-size:11px;line-height:11px;color:#303030;font-weight:400;letter-spacing:-0.14px;">Total de viajes realizados en el periodo</div>
<div class="t" style="left:206.5px;top:500.69px;font-size:11px;line-height:11px;color:#303030;font-weight:400;letter-spacing:-0.25px;">Mantenimiento</div>
<div class="t" style="left:321.6px;top:500.69px;font-size:11px;line-height:11px;color:#303030;font-weight:400;letter-spacing:-0.25px;">Consulta de Resultado</div>
<div class="t" style="left:491px;top:500.69px;font-size:11px;line-height:11px;color:#303030;font-weight:400;letter-spacing:-0.14px;">Costo de Mantenimiento por kilometro recorrido</div>
<div class="t" style="left:206.5px;top:518.69px;font-size:11px;line-height:11px;color:#303030;font-weight:400;letter-spacing:-0.25px;">Mantenimiento</div>
<div class="t" style="left:321.6px;top:518.69px;font-size:11px;line-height:11px;color:#303030;font-weight:400;letter-spacing:-0.25px;">Consulta de Resultado</div>
<div class="t" style="left:491px;top:518.69px;font-size:11px;line-height:11px;color:#303030;font-weight:400;letter-spacing:-0.14px;">Total de Fallas en Proceso de Reparar</div>
<div class="t" style="left:206.5px;top:536.69px;font-size:11px;line-height:11px;color:#303030;font-weight:400;letter-spacing:-0.25px;">Mantenimiento</div>
<div class="t" style="left:321.6px;top:536.69px;font-size:11px;line-height:11px;color:#303030;font-weight:400;letter-spacing:-0.25px;">Consulta de Resultado</div>
<div class="t" style="left:491px;top:536.69px;font-size:11px;line-height:11px;color:#303030;font-weight:400;letter-spacing:-0.14px;">Total de Fallas sin Atender</div>
<div class="t" style="left:206.5px;top:554.69px;font-size:11px;line-height:11px;color:#303030;font-weight:400;letter-spacing:-0.25px;">Mantenimiento</div>
<div class="t" style="left:321.6px;top:554.69px;font-size:11px;line-height:11px;color:#303030;font-weight:400;letter-spacing:-0.25px;">Consulta de Resultado</div>
<div class="t" style="left:491px;top:554.69px;font-size:11px;line-height:11px;color:#303030;font-weight:400;letter-spacing:-0.14px;">Total de gastos por concepto de mantenimiento</div>
<div class="t" style="left:206.5px;top:572.69px;font-size:11px;line-height:11px;color:#303030;font-weight:400;letter-spacing:-0.25px;">Mantenimiento</div>
<div class="t" style="left:321.6px;top:572.69px;font-size:11px;line-height:11px;color:#303030;font-weight:400;letter-spacing:-0.25px;">Consulta de Resultado</div>
<div class="t" style="left:491px;top:572.69px;font-size:11px;line-height:11px;color:#303030;font-weight:400;letter-spacing:-0.14px;">Total de Ordenes de Servicio Correctivas</div>
<div class="t" style="left:206.5px;top:590.69px;font-size:11px;line-height:11px;color:#303030;font-weight:400;letter-spacing:-0.25px;">Mantenimiento</div>
<div class="t" style="left:321.6px;top:590.69px;font-size:11px;line-height:11px;color:#303030;font-weight:400;letter-spacing:-0.25px;">Consulta de Resultado</div>
<div class="t" style="left:491px;top:590.69px;font-size:11px;line-height:11px;color:#303030;font-weight:400;letter-spacing:-0.14px;">Total de Ordenes de Servicio Preventivas</div>
<div class="t" style="left:206.5px;top:608.69px;font-size:11px;line-height:11px;color:#303030;font-weight:400;letter-spacing:-0.25px;">Mantenimiento</div>
<div class="t" style="left:321.6px;top:608.69px;font-size:11px;line-height:11px;color:#303030;font-weight:400;letter-spacing:-0.25px;">Consulta de Resultado</div>
<div class="t" style="left:491px;top:608.69px;font-size:11px;line-height:11px;color:#303030;font-weight:400;letter-spacing:-0.14px;">Total de OSC Abiertas</div>
<div class="t" style="left:206.5px;top:626.69px;font-size:11px;line-height:11px;color:#303030;font-weight:400;letter-spacing:-0.25px;">Mantenimiento</div>
<div class="t" style="left:321.6px;top:626.69px;font-size:11px;line-height:11px;color:#303030;font-weight:400;letter-spacing:-0.25px;">Consulta de Resultado</div>
<div class="t" style="left:491px;top:626.69px;font-size:11px;line-height:11px;color:#303030;font-weight:400;letter-spacing:-0.14px;">Total de OSL Abiertas</div>
<div class="t" style="left:206.5px;top:644.69px;font-size:11px;line-height:11px;color:#303030;font-weight:400;letter-spacing:-0.25px;">Mantenimiento</div>
<div class="t" style="left:321.6px;top:644.69px;font-size:11px;line-height:11px;color:#303030;font-weight:400;letter-spacing:-0.25px;">Consulta de Resultado</div>
<div class="t" style="left:491px;top:644.69px;font-size:11px;line-height:11px;color:#303030;font-weight:400;letter-spacing:-0.14px;">Total de OSP Abiertas</div>
<div class="t" style="left:206.5px;top:662.69px;font-size:11px;line-height:11px;color:#303030;font-weight:400;letter-spacing:-0.25px;">Neumáticos</div>
<div class="t" style="left:321.6px;top:662.69px;font-size:11px;line-height:11px;color:#303030;font-weight:400;letter-spacing:-0.25px;">Consulta de Resultado</div>
<div class="t" style="left:491px;top:662.69px;font-size:11px;line-height:11px;color:#303030;font-weight:400;letter-spacing:-0.14px;">Total de Neumaticos debajo de profundidad Mínima</div>
<div class="t" style="left:206.5px;top:680.69px;font-size:11px;line-height:11px;color:#303030;font-weight:400;letter-spacing:-0.25px;">Neumáticos</div>
<div class="t" style="left:321.6px;top:680.69px;font-size:11px;line-height:11px;color:#303030;font-weight:400;letter-spacing:-0.25px;">Consulta de Resultado</div>
<div class="t" style="left:491px;top:680.69px;font-size:11px;line-height:11px;color:#303030;font-weight:400;letter-spacing:-0.14px;">Total de Neumaticos montados en la flota</div>
<div class="t" style="left:206.5px;top:698.69px;font-size:11px;line-height:11px;color:#303030;font-weight:400;letter-spacing:-0.25px;">Neumáticos</div>
<div class="t" style="left:321.6px;top:698.69px;font-size:11px;line-height:11px;color:#303030;font-weight:400;letter-spacing:-0.25px;">Consulta de Resultado</div>
<div class="t" style="left:491px;top:698.69px;font-size:11px;line-height:11px;color:#303030;font-weight:400;letter-spacing:-0.14px;">Total de Neumaticos sin Precio de Compra</div>
<div class="t" style="left:206.5px;top:716.69px;font-size:11px;line-height:11px;color:#303030;font-weight:400;letter-spacing:-0.25px;">Operación</div>
<div class="t" style="left:321.6px;top:716.69px;font-size:11px;line-height:11px;color:#303030;font-weight:400;letter-spacing:-0.25px;">Consulta de Resultado</div>
<div class="t" style="left:491px;top:716.69px;font-size:11px;line-height:11px;color:#303030;font-weight:400;letter-spacing:-0.14px;">Total de gastos por concepto de combustibles</div>
<div class="t" style="left:206.5px;top:822.19px;font-size:11px;line-height:11px;color:#1f1f1f;font-weight:400;letter-spacing:-0.05px;">Total 29 Registros</div>
<div class="b" style="left:100px;top:843px;width:1px;height:19px;background:#b8b8b8"></div>
<div class="b" style="left:455px;top:843px;width:1px;height:19px;background:#b8b8b8"></div>
<div class="b" style="left:740px;top:843px;width:1px;height:19px;background:#b8b8b8"></div>
<div class="b" style="left:825px;top:843px;width:1px;height:19px;background:#b8b8b8"></div>
<div class="b" style="left:880px;top:843px;width:1px;height:19px;background:#b8b8b8"></div>
<div class="b" style="left:935px;top:843px;width:1px;height:19px;background:#b8b8b8"></div>
<div class="b" style="left:1065px;top:843px;width:1px;height:19px;background:#b8b8b8"></div>
<div class="t" style="left:106px;top:848.19px;font-size:11px;line-height:11px;color:#1f1f1f;font-weight:400;letter-spacing:-0.2px;">Empresa: Empresa ACME, S.A. de C.V.</div>
<div class="t" style="left:458.2px;top:848.19px;font-size:11px;line-height:11px;color:#1f1f1f;font-weight:400;letter-spacing:-0.09px;">Administrador: Admin()</div>
<div class="t" style="left:743.3px;top:848.19px;font-size:11px;line-height:11px;color:#1f1f1f;font-weight:400;letter-spacing:-0.36px;">Access 2000</div>
<div class="t" style="left:939.5px;top:848.61px;font-size:10.5px;line-height:10.5px;color:#a0a0a0;font-weight:400;letter-spacing:-0.75px;">CAPS</div>
<div class="t" style="left:974px;top:848.61px;font-size:10.5px;line-height:10.5px;color:#1f1f1f;font-weight:400;letter-spacing:-0.63px;">NUM</div>
<div class="t" style="left:1005px;top:848.61px;font-size:10.5px;line-height:10.5px;color:#a0a0a0;font-weight:400;letter-spacing:-0.82px;">SCRL</div>
<div class="t" style="left:1041.5px;top:848.61px;font-size:10.5px;line-height:10.5px;color:#a0a0a0;font-weight:400;letter-spacing:-0.33px;">INS</div>
<div class="b" style="left:0px;top:862px;width:1152px;height:2px;background:#1e1e1e"></div>
<div class="b" style="left:0px;top:862px;width:46px;height:2px;background:#161616"></div>
<div class="b" style="left:762px;top:862px;width:48px;height:2px;background:#3c3c3c"></div>
<div class="b" style="left:1147px;top:862px;width:1px;height:2px;background:#9a9a9a"></div>
</body></html>
